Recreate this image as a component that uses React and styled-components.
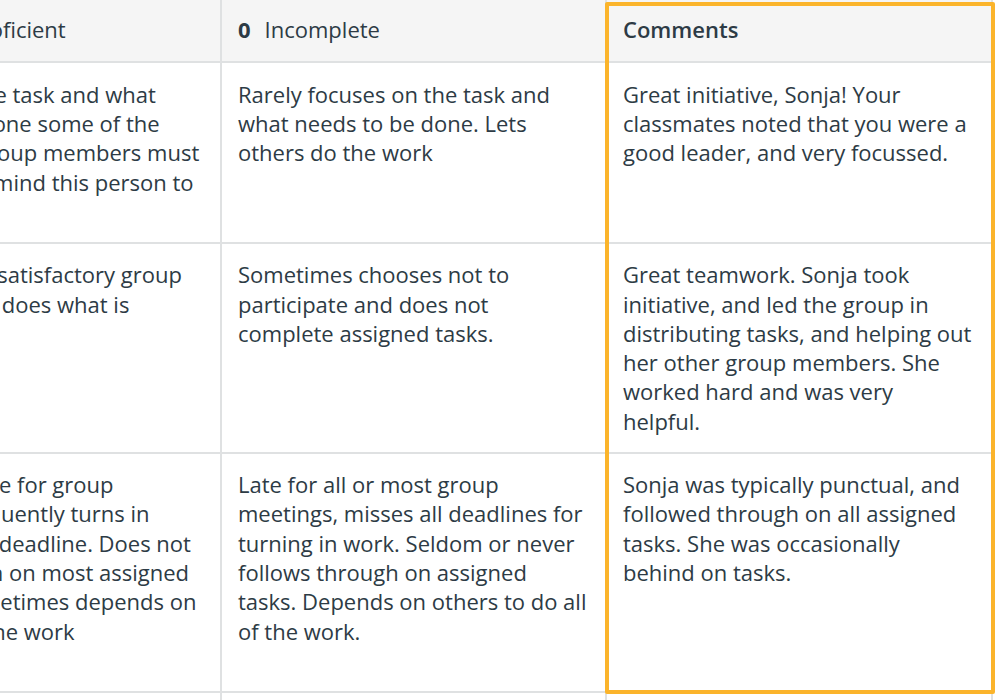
import React from 'react';
import styled, { createGlobalStyle } from 'styled-components';

const GlobalStyle = createGlobalStyle`
  html, body {
    margin: 0;
    padding: 0;
    background: #ffffff;
    overflow: hidden;
  }
  body {
    font-family: "Open Sans", "Liberation Sans", sans-serif;
    color: #2d3b45;
  }
`;

const Table = styled.div`
  display: grid;
  grid-template-columns: 385px 385px 386px;
  margin-left: -163px;
  width: max-content;
`;

const Cell = styled.div`
  grid-column: ${(p) => p.$col};
  grid-row: ${(p) => p.$row};
  box-sizing: border-box;
  padding: ${(p) => (p.$head ? '15px 16px 17px' : '16.5px 16px 15.5px')};
  border-right: 2px solid #dfe1e2;
  border-bottom: 2px solid #dfe1e2;
  background: ${(p) => (p.$head ? '#f5f5f5' : '#ffffff')};
  font-size: 22px;
  line-height: 29.3px;
  font-weight: ${(p) => (p.$head && p.$strong ? 600 : 400)};
`;

const Line = styled.span`
  display: block;
  white-space: nowrap;
`;

const Points = styled.strong`
  font-weight: 700;
  margin-right: 14px;
`;

const Highlight = styled.div`
  grid-column: 3;
  grid-row: 1 / 5;
  z-index: 1;
  margin: 2px -2px -1px -2px;
  border: 4px solid #fbb42b;
  border-radius: 2px;
  pointer-events: none;
`;

const rows = [
  {
    first: [
      'Focuses on the task and what',
      'needs to be done some of the',
      'time. Other group members must',
      'sometimes remind this person to',
      'stay on-task.',
    ],
    rating: 'Rarely focuses on the task and what needs to be done. Lets others do the work',
    comment:
      'Great initiative, Sonja! Your classmates noted that you were a good leader, and very focussed.',
  },
  {
    first: ['Contributes a satisfactory group', 'effort. Usually does what is', 'required.'],
    rating: 'Sometimes chooses not to participate and does not complete assigned tasks.',
    comment:
      'Great teamwork. Sonja took initiative, and led the group in distributing tasks, and helping out her other group members. She worked hard and was very helpful.',
  },
  {
    first: [
      'Sometimes late for group',
      'meetings, frequently turns in',
      'work past the deadline. Does not',
      'follow through on most assigned',
      'tasks and sometimes depends on',
      'others to do the work',
      'for them.',
    ],
    rating:
      'Late for all or most group meetings, misses all deadlines for turning in work. Seldom or never follows through on assigned tasks. Depends on others to do all of the work.',
    comment:
      'Sonja was typically punctual, and followed through on all assigned tasks. She was occasionally behind on tasks.',
  },
];

export default function App() {
  return (
    <>
      <GlobalStyle />
      <Table>
        <Cell $head $col={1} $row={1}>
          <Points>1</Points>Partially Proficient
        </Cell>
        <Cell $head $col={2} $row={1}>
          <Points>0</Points>Incomplete
        </Cell>
        <Cell $head $strong $col={3} $row={1}>
          Comments
        </Cell>

        {rows.map((r, i) => (
          <React.Fragment key={i}>
            <Cell $col={1} $row={i + 2}>
              {r.first.map((l) => (
                <Line key={l}>{l}</Line>
              ))}
            </Cell>
            <Cell $col={2} $row={i + 2}>{r.rating}</Cell>
            <Cell $col={3} $row={i + 2}>{r.comment}</Cell>
          </React.Fragment>
        ))}

        <Cell $col={1} $row={5}>Participation</Cell>
        <Cell $col={2} $row={5}>Rarely participates</Cell>
        <Cell $col={3} $row={5}>Sonja participated fully.</Cell>

        <Highlight />
      </Table>
    </>
  );
}
